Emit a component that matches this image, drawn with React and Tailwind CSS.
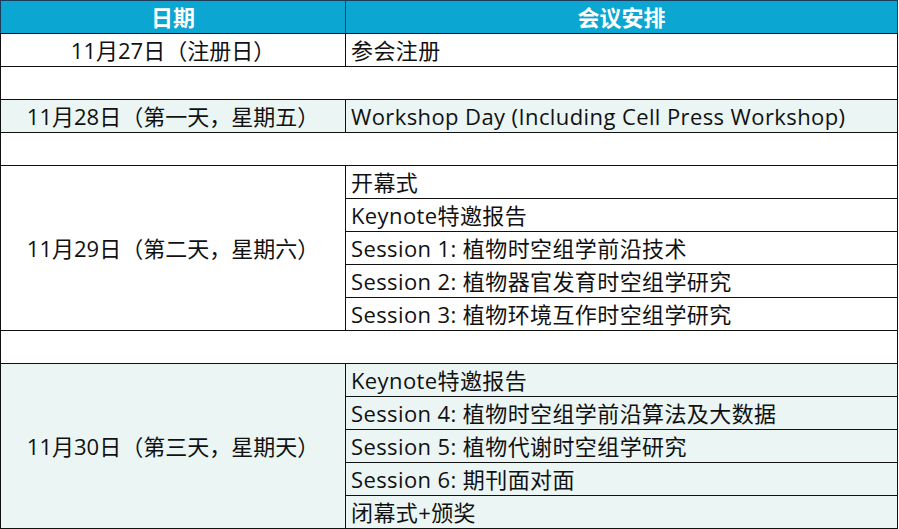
import React from "react";

const font = { fontFamily: '"Open Sans", "Noto Sans CJK SC", sans-serif' };

const Cell = ({ children, className = "" }) => (
  <td className={`border border-[#111] px-[5px] p-0 h-[33px] leading-none ${className}`}>
    {children}
  </td>
);

const Item = ({ children }) => (
  <Cell className="tracking-[0.4px] whitespace-nowrap">{children}</Cell>
);

const Blank = () => (
  <tr>
    <td colSpan={2} className="border border-[#111] h-[33px]"></td>
  </tr>
);

const day29 = [
  "开幕式",
  "Keynote特邀报告",
  "Session 1: 植物时空组学前沿技术",
  "Session 2: 植物器官发育时空组学研究",
  "Session 3: 植物环境互作时空组学研究",
];

const day30 = [
  "Keynote特邀报告",
  "Session 4: 植物时空组学前沿算法及大数据",
  "Session 5: 植物代谢时空组学研究",
  "Session 6: 期刊面对面",
  "闭幕式+颁奖",
];

export default function App() {
  return (
    <div className="w-[899px] h-[529px] bg-white overflow-hidden text-[#111]" style={font}>
      <table className="w-[898px] border-collapse table-fixed text-[22px]">
        <colgroup>
          <col className="w-[345px]" />
          <col />
        </colgroup>
        <thead>
          <tr className="bg-[#0ba6d2] text-white">
            <th className="border border-[#1d3c5c] border-b-[#111] h-[33px] font-bold leading-none">日期</th>
            <th className="border border-[#1d3c5c] border-b-[#111] h-[33px] font-bold leading-none">会议安排</th>
          </tr>
        </thead>
        <tbody>
          <tr>
            <Cell className="text-center">11月27日（注册日）</Cell>
            <Item>参会注册</Item>
          </tr>
          <Blank />
          <tr className="bg-[#eaf5f4]">
            <Cell className="text-center">11月28日（第一天，星期五）</Cell>
            <Item>Workshop Day (Including Cell Press Workshop)</Item>
          </tr>
          <Blank />
          {day29.map((item, i) => (
            <tr key={item}>
              {i === 0 && (
                <td rowSpan={5} className="border border-[#111] text-center">
                  11月29日（第二天，星期六）
                </td>
              )}
              <Item>{item}</Item>
            </tr>
          ))}
          <Blank />
          {day30.map((item, i) => (
            <tr key={item} className="bg-[#eaf5f4]">
              {i === 0 && (
                <td rowSpan={5} className="border border-[#111] text-center">
                  11月30日（第三天，星期天）
                </td>
              )}
              <Item>{item}</Item>
            </tr>
          ))}
        </tbody>
      </table>
    </div>
  );
}
